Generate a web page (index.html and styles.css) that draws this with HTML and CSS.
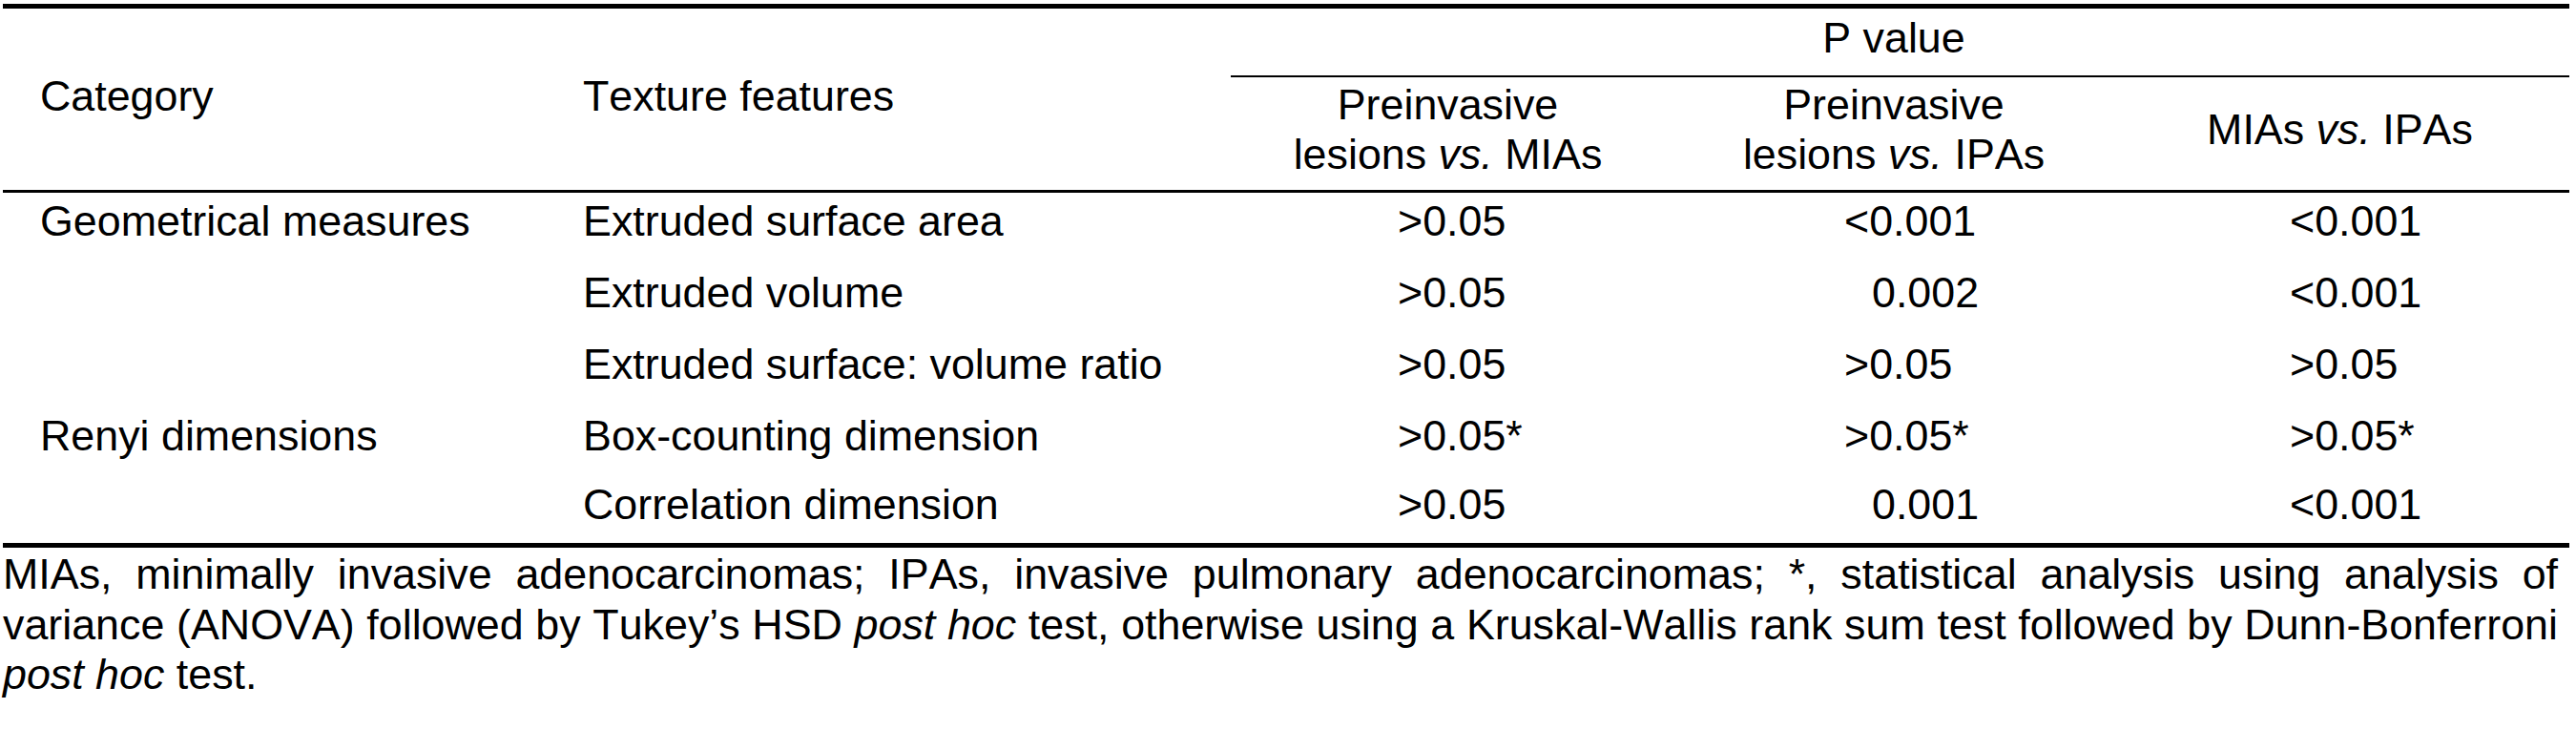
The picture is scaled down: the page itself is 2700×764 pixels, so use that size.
FILE: index.html
```html
<!DOCTYPE html>
<html lang="en">
<head>
<meta charset="utf-8">
<title>Texture features P values</title>
<link rel="stylesheet" href="styles.css">
</head>
<body>
<div class="page">
  <table class="tbl">
    <colgroup>
      <col class="c-cat">
      <col class="c-feat">
      <col class="c-v1">
      <col class="c-v2">
      <col class="c-v3">
    </colgroup>
    <thead>
      <tr>
        <th rowspan="2" class="h-lab h-cat">Category</th>
        <th rowspan="2" class="h-lab h-feat">Texture features</th>
        <th colspan="3" class="h-p">P value</th>
      </tr>
      <tr>
        <th class="h-sub">Preinvasive<br>lesions <i>vs.</i> MIAs</th>
        <th class="h-sub">Preinvasive<br>lesions <i>vs.</i> IPAs</th>
        <th class="h-sub">MIAs <i>vs.</i> IPAs</th>
      </tr>
    </thead>
    <tbody>
      <tr>
        <td class="cat">Geometrical measures</td>
        <td class="feat">Extruded surface area</td>
        <td class="val">&gt;0.05</td>
        <td class="val">&lt;0.001</td>
        <td class="val">&lt;0.001</td>
      </tr>
      <tr>
        <td class="cat"></td>
        <td class="feat">Extruded volume</td>
        <td class="val">&gt;0.05</td>
        <td class="val ind">0.002</td>
        <td class="val">&lt;0.001</td>
      </tr>
      <tr>
        <td class="cat"></td>
        <td class="feat">Extruded surface: volume ratio</td>
        <td class="val">&gt;0.05</td>
        <td class="val">&gt;0.05</td>
        <td class="val">&gt;0.05</td>
      </tr>
      <tr>
        <td class="cat">Renyi dimensions</td>
        <td class="feat">Box-counting dimension</td>
        <td class="val">&gt;0.05*</td>
        <td class="val">&gt;0.05*</td>
        <td class="val">&gt;0.05*</td>
      </tr>
      <tr class="last">
        <td class="cat"></td>
        <td class="feat">Correlation dimension</td>
        <td class="val">&gt;0.05</td>
        <td class="val ind">0.001</td>
        <td class="val">&lt;0.001</td>
      </tr>
    </tbody>
  </table>
  <p class="note">MIAs, minimally invasive adenocarcinomas; IPAs, invasive pulmonary adenocarcinomas; *, statistical analysis using analysis of variance (ANOVA) followed by Tukey’s HSD <i>post hoc</i> test, otherwise using a Kruskal-Wallis rank sum test followed by Dunn-Bonferroni <i>post hoc</i> test.</p>
</div>
</body>
</html>
```

FILE: styles.css
```css
html, body {
  margin: 0;
  padding: 0;
  background: #ffffff;
}

body {
  font-family: "Liberation Sans", Arial, Helvetica, sans-serif;
  font-size: 44.8px;
  color: #000000;
  font-kerning: none;
}

.page {
  width: 2690px;
  padding: 4px 0 0 3px;
}

.tbl {
  width: 2690px;
  table-layout: fixed;
  border-collapse: separate;
  border-spacing: 0;
  line-height: 52px;
}

.c-cat { width: 605px; }
.c-feat { width: 682px; }
.c-v1 { width: 468px; }
.c-v2 { width: 467px; }
.c-v3 { width: 468px; }

.tbl th {
  font-weight: normal;
}

.tbl thead tr:first-child th {
  border-top: 5px solid #000000;
}

.h-lab {
  text-align: left;
  vertical-align: middle;
  padding-top: 4px;
  padding-bottom: 12px;
  border-bottom: 3px solid #000000;
}

.h-cat { padding-left: 39px; }
.h-feat { padding-left: 3px; }

.h-p {
  text-align: center;
  vertical-align: top;
  padding: 4px 13px 14px 0;
  border-bottom: 2px solid #000000;
}

.h-sub {
  text-align: center;
  vertical-align: middle;
  padding: 2px 13px 12px 0;
  border-bottom: 3px solid #000000;
}

.tbl td {
  vertical-align: top;
  padding-top: 3px;
  padding-bottom: 20px;
  white-space: nowrap;
}

.tbl td.cat { padding-left: 39px; }
.tbl td.feat { padding-left: 3px; }
.tbl td.val { padding-left: 175px; }
.tbl td.val.ind { padding-left: 204px; }

.tbl tr.last td {
  padding-top: 0;
  padding-bottom: 15px;
  border-bottom: 5px solid #000000;
}

.note {
  margin: 1px 0 0 0;
  padding-right: 12px;
  line-height: 52.5px;
  text-align: justify;
}
```
